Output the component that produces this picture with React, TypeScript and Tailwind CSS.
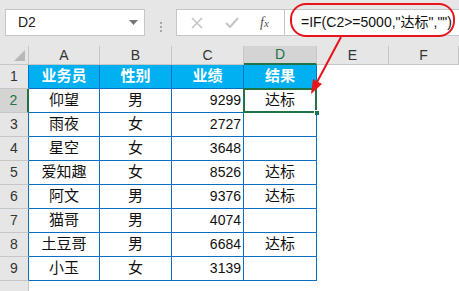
import React from "react";

type Row = { name: string; gender: string; score: number; result: string };

const rows: Row[] = [
  { name: "仰望", gender: "男", score: 9299, result: "达标" },
  { name: "雨夜", gender: "女", score: 2727, result: "" },
  { name: "星空", gender: "女", score: 3648, result: "" },
  { name: "爱知趣", gender: "女", score: 8526, result: "达标" },
  { name: "阿文", gender: "男", score: 9376, result: "达标" },
  { name: "猫哥", gender: "男", score: 4074, result: "" },
  { name: "土豆哥", gender: "男", score: 6684, result: "达标" },
  { name: "小玉", gender: "女", score: 3139, result: "" },
];

const cols = ["A", "B", "C", "D", "E", "F"];
const font = { fontFamily: '"Liberation Sans", "Noto Sans CJK SC", sans-serif' };

const FormulaBar = () => (
  <div className="flex h-[46px] bg-[#e6e6e6] pt-[9px]">
    {/* name box */}
    <div className="ml-[5px] flex h-[27px] w-[140px] items-center justify-between border border-[#c6c6c6] bg-white pl-[12px] pr-[6px]">
      <span className="text-[14px] text-[#222]">D2</span>
      <svg width="9" height="5" viewBox="0 0 9 5">
        <path d="M0 0H9L4.5 5Z" fill="#777" />
      </svg>
    </div>
    <div className="flex w-[31px] flex-col items-center justify-center gap-[2px] pb-[1px]">
      <span className="h-[2px] w-[2px] bg-[#a6a6a6]" />
      <span className="h-[2px] w-[2px] bg-[#a6a6a6]" />
      <span className="h-[2px] w-[2px] bg-[#a6a6a6]" />
    </div>
    {/* cancel / enter / fx */}
    <div className="flex h-[27px] w-[109px] items-center border border-[#c6c6c6] bg-white">
      <svg className="ml-[14px]" width="12" height="12" viewBox="0 0 12 12">
        <path d="M1 1L11 11M11 1L1 11" stroke="#c4c4c4" strokeWidth="1.6" />
      </svg>
      <svg className="ml-[22px]" width="14" height="11" viewBox="0 0 14 11">
        <path d="M1 6L5 10L13 1" stroke="#c4c4c4" strokeWidth="2" fill="none" />
      </svg>
      <span
        className="ml-[21px] text-[14px] italic text-[#555]"
        style={{ fontFamily: '"Liberation Serif", serif' }}
      >
        f<span className="text-[11px]">x</span>
      </span>
    </div>
    <div className="flex h-[27px] flex-1 items-center border-y border-[#c6c6c6] bg-white pl-[16px]">
      <span className="text-[14px] text-[#111]" style={font}>
        =IF(C2&gt;=5000,"达标","")
      </span>
    </div>
  </div>
);

const blue = "border-[#0a6fc2]";

const App = () => {
  return (
    <div className="relative h-[291px] w-[459px] overflow-hidden bg-white" style={font}>
      <FormulaBar />

      <div className="grid grid-cols-[29px_71px_72px_72px_73px_72px_1fr] grid-rows-[19px_repeat(9,24px)_1fr] h-[245px]">
        {/* column letters */}
        <div className="relative border-r border-b border-[#c6c6c6] bg-[#e6e6e6]">
          <svg className="absolute bottom-[3px] right-[3px]" width="11" height="11" viewBox="0 0 11 11">
            <path d="M11 0V11H0Z" fill="#b8b8b8" />
          </svg>
        </div>
        {cols.map((c) => (
          <div
            key={c}
            className={`flex items-center justify-center text-[14px] ${
              c === "D"
                ? "border-r border-b-2 border-r-[#c6c6c6] border-b-[#217346] bg-[#d4d4d4] text-[#217346]"
                : "border-r border-b border-[#c6c6c6] bg-[#e6e6e6] text-[#333]"
            }`}
          >
            {c}
          </div>
        ))}

        {/* row 1: headings */}
        <div className={`flex items-center justify-center border-r ${blue} border-b border-b-[#c6c6c6] bg-[#e6e6e6] text-[14px] text-[#333]`}>
          1
        </div>
        {["业务员", "性别", "业绩", "结果"].map((h) => (
          <div
            key={h}
            className={`flex items-center justify-center border-r border-b ${blue} bg-[#00b0f0] text-[15px] font-bold text-white`}
          >
            {h}
          </div>
        ))}
        <div />
        <div />

        {rows.map((r, i) => {
          const n = i + 2;
          const active = n === 2;
          return (
            <React.Fragment key={n}>
              <div
                className={`flex items-center justify-center border-b border-b-[#c6c6c6] text-[14px] ${
                  active
                    ? "border-r-2 border-r-[#217346] bg-[#d4d4d4] text-[#217346]"
                    : `border-r ${blue} bg-[#e6e6e6] text-[#333]`
                }`}
              >
                {n}
              </div>
              <div className={`flex items-center justify-center border-r border-b ${blue} text-[15px] text-[#111]`}>
                {r.name}
              </div>
              <div className={`flex items-center justify-center border-r border-b ${blue} text-[15px] text-[#111]`}>
                {r.gender}
              </div>
              <div className={`flex items-center justify-end border-r border-b ${blue} pr-[2px] text-[14px] text-[#111]`}>
                {r.score}
              </div>
              <div className={`relative flex items-center justify-center border-r border-b ${blue} text-[15px] text-[#111]`}>
                {r.result}
                {active && (
                  <>
                    <div className="absolute inset-[-1px] border-2 border-[#217346]" />
                    <div className="absolute bottom-[-4px] right-[-4px] h-[6px] w-[6px] border border-white bg-[#217346]" />
                  </>
                )}
              </div>
              <div />
              <div />
            </React.Fragment>
          );
        })}

        {/* row 10, partly visible */}
        <div className="border-r border-[#c6c6c6] bg-[#e6e6e6]" />
      </div>

      {/* red callout around the formula and arrow to D2 */}
      <div className="absolute left-[290px] top-[3px] h-[34px] w-[165px] rounded-[16px] border-2 border-[#e8141c]" />
      <svg className="absolute left-0 top-0" width="459" height="291" viewBox="0 0 459 291">
        <path d="M341 37L316 84" stroke="#e8141c" strokeWidth="2" />
        <path d="M311 94L322 84L313 79Z" fill="#e8141c" />
      </svg>
    </div>
  );
};

export default App;
